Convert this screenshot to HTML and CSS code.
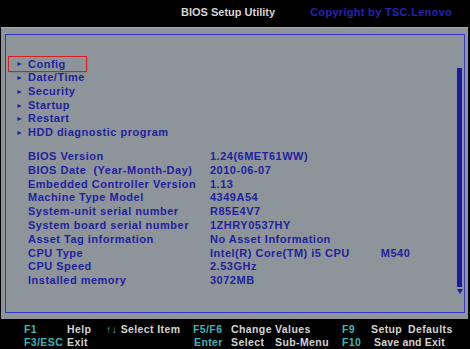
FILE: index.html
```
<!DOCTYPE html>
<html>
	<head>
		<meta charset="UTF-8">
		<title>BIOS Setup Utility</title>
		<link rel="stylesheet" href="styles.css">
	</head>
	<body>
		<div class="bios">
			<div class="top-bar">
				<span class="title">BIOS Setup Utility</span>
				<span class="copy">Copyright by TSC.Lenovo</span>
			</div>
			<div class="main">
				<div class="panel">
					<div class="content">
						<ul class="menu">
							<li class="active"><span class="arrow">&#9658;</span>Config</li>
							<li><span class="arrow">&#9658;</span>Date/Time</li>
							<li><span class="arrow">&#9658;</span>Security</li>
							<li><span class="arrow">&#9658;</span>Startup</li>
							<li><span class="arrow">&#9658;</span>Restart</li>
							<li><span class="arrow">&#9658;</span>HDD diagnostic program</li>
						</ul>
						<div class="info">
							<span>BIOS Version</span><span>1.24(6MET61WW)</span>
							<span>BIOS Date&nbsp; (Year-Month-Day)</span><span>2010-06-07</span>
							<span>Embedded Controller Version</span><span>1.13</span>
							<span>Machine Type Model</span><span>4349A54</span>
							<span>System-unit serial number</span><span>R85E4V7</span>
							<span>System board serial number</span><span>1ZHRY0537HY</span>
							<span>Asset Tag information</span><span>No Asset Information</span>
							<span>CPU Type</span><span>Intel(R) Core(TM) i5 CPU<em class="model">M540</em></span>
							<span>CPU Speed</span><span>2.53GHz</span>
							<span>Installed memory</span><span>3072MB</span>
						</div>
					</div>
					<div class="scroll">
						<div class="thumb"></div>
						<div class="down"></div>
					</div>
				</div>
			</div>
			<div class="bottom-bar">
				<span class="key">F1</span><span>Help</span><span><b class="key">&uarr;&darr;</b> Select Item</span><span class="key">F5/F6</span><span class="pair"><i>Change</i>Values</span><span class="key">F9</span><span class="pair"><i class="short">Setup</i>Defaults</span>
				<span class="key">F3/ESC</span><span>Exit</span><span></span><span class="key enter">Enter</span><span class="pair"><i>Select</i>Sub-Menu</span><span class="key">F10</span><span class="save">Save and Exit</span>
			</div>
		</div>
	</body>
</html>
```
FILE: styles.css
```
*{
	padding: 0;
	margin: 0;
}
li{
	list-style: none;
}
body{
	background-color: #000;
	font-family: "Liberation Sans", Arial, sans-serif;
	font-weight: bold;
	font-size: 11px;
	letter-spacing: 0.5px;
	white-space: nowrap;
}
.bios{
	width: 470px;
	height: 349px;
	display: flex;
	flex-direction: column;
}
.top-bar{
	height: 27px;
	flex-shrink: 0;
	background-color: #000;
	display: flex;
	align-items: center;
	padding-bottom: 3px;
	box-sizing: border-box;
}
.top-bar .title{
	color: #d4d4d4;
	margin-left: 181px;
	letter-spacing: 0;
}
.top-bar .copy{
	color: #2424b4;
	margin-left: 35px;
	letter-spacing: 0.3px;
}
.main{
	height: 292px;
	flex-shrink: 0;
	box-sizing: border-box;
	background-color: #8e959a;
	border-top: 1px solid #a4aaae;
	padding: 6px 3px 6px 4px;
	margin: 0 2px 0 1px;
}
.panel{
	height: 100%;
	box-sizing: border-box;
	border: 1px solid #3434c4;
	display: flex;
	color: #2222a0;
}
.content{
	flex: 1;
	padding: 22px 0 0 3px;
}
.menu li{
	height: 13.8px;
	line-height: 13.8px;
	padding-left: 7px;
	width: 77px;
	box-sizing: border-box;
}
.menu li .arrow{
	display: inline-block;
	width: 12px;
	font-size: 7px;
	vertical-align: top;
}
.menu li.active{
	height: 14px;
	line-height: 14px;
	outline: 1px solid #d42020;
	box-shadow: 1px 1px 2px rgba(0,0,0,0.25);
}
.info{
	margin-top: 10px;
	padding-left: 19px;
	display: grid;
	grid-template-columns: 182px auto;
	grid-auto-rows: 13.8px;
	line-height: 13.8px;
}
.info .model{
	font-style: normal;
	margin-left: 31px;
}
.scroll{
	width: 5px;
	margin-right: 2px;
	padding-top: 33px;
	display: flex;
	flex-direction: column;
	align-items: center;
}
.scroll .thumb{
	width: 5px;
	height: 219px;
	background-color: #1a1aa8;
}
.scroll .down{
	margin-top: 2px;
	width: 0;
	height: 0;
	border-left: 3px solid transparent;
	border-right: 3px solid transparent;
	border-top: 5px solid #1a1aa8;
}
.bottom-bar{
	height: 30px;
	flex-shrink: 0;
	box-sizing: border-box;
	background-color: #000;
	color: #d4d4d4;
	display: grid;
	grid-template-columns: 43px 39px 87px 38px 111px 29px auto;
	grid-auto-rows: 13px;
	line-height: 13px;
	padding: 4px 0 0 24px;
	font-size: 10.5px;
	letter-spacing: 0.4px;
}
.bottom-bar .key{
	color: #3cb4b4;
}
.bottom-bar b{
	font-weight: normal;
}
.bottom-bar .enter{
	padding-left: 1px;
}
.bottom-bar .pair i{
	font-style: normal;
	display: inline-block;
	width: 44px;
}
.bottom-bar .pair i.short{
	width: 37px;
}
.bottom-bar .save{
	padding-left: 3px;
	letter-spacing: 0.2px;
}
```
